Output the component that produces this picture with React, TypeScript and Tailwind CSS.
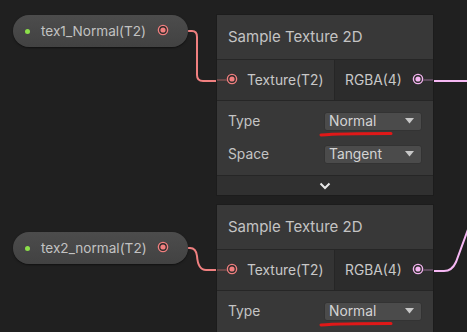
import React from "react";

const font = { fontFamily: "Inter, 'Noto Sans', sans-serif" };

function Port({ color }: { color: string }) {
  return (
    <svg width="12" height="12" viewBox="0 0 12 12" className="shrink-0">
      <circle cx="6" cy="6" r="4.6" fill="#2a2a2a" stroke={color} strokeWidth="1.4" />
      <circle cx="6" cy="6" r="2.6" fill={color} />
    </svg>
  );
}

function Pill({ label, top }: { label: string; top: number }) {
  return (
    <div
      className="absolute left-[13px] w-[175px] h-[32px] rounded-[16px] bg-gradient-to-b from-[#4c4c4c] to-[#424242] shadow-[0_1px_2px_rgba(0,0,0,0.5)] flex items-center pl-[12px] pr-[19px]"
      style={{ top }}
    >
      <div className="w-[5px] h-[5px] rounded-full bg-[#8ce04a]" />
      <span className="ml-[11px] text-[13.6px] text-[#c2c2c2]">{label}</span>
      <div className="ml-auto -mt-[3px]">
        <Port color="#f07f7f" />
      </div>
    </div>
  );
}

function Dropdown({ value, underline }: { value: string; underline?: boolean }) {
  return (
    <div className="relative w-[98px] h-[19px] rounded-[3px] bg-[#4b4b4b] border border-[#333] flex items-center pl-[4px] pr-[7px]">
      <span className="text-[13.8px] text-[#d4d4d4]">{value}</span>
      <svg width="9" height="6" viewBox="0 0 9 6" className="ml-auto">
        <polygon points="0,0 9,0 4.5,5.5" fill="#c8c8c8" />
      </svg>
      {underline && (
        <svg width="76" height="8" viewBox="0 0 76 8" className="absolute left-[-6px] top-[17px]">
          <path d="M2 5 C 20 3.5, 50 3.5, 72 3.5" stroke="#e01818" strokeWidth="3" fill="none" strokeLinecap="round" />
        </svg>
      )}
    </div>
  );
}

function Node({ top, full }: { top: number; full?: boolean }) {
  return (
    <div className="absolute left-[217px] w-[216px] bg-[#383838] shadow-[0_0_0_1px_#1c1c1c]" style={{ top }}>
      <div className="h-[45px] flex items-center pl-[11px] border-b border-[#262626]">
        <span className="text-[15px] text-[#c4c4c4]">Sample Texture 2D</span>
      </div>
      <div className="h-[41px] flex border-b border-[#262626]">
        <div className="w-[118px] bg-[#343434] flex items-center border-r border-[#262626] relative">
          <div className="absolute left-0 top-[19px] w-[10px] h-[2px] bg-[#6a4848]" />
          <div className="ml-[9px] -mt-[2px]">
            <Port color="#f07f7f" />
          </div>
          <span className="ml-[9px] text-[13.8px] text-[#c8c8c8]">Texture(T2)</span>
        </div>
        <div className="flex-1 bg-[#2c2c2c] flex items-center relative">
          <span className="ml-[10px] text-[13.8px] text-[#c8c8c8]">RGBA(4)</span>
          <div className="ml-[10px] -mt-[2px]">
            <Port color="#f4b4f0" />
          </div>
          <div className="absolute right-0 top-[19px] w-[10px] h-[2px] bg-[#5c4a5c]" />
        </div>
      </div>
      <div className="pl-[11px] pr-[11px] pt-[10px] pb-[11px] flex flex-col gap-[12px]">
        <div className="flex items-center justify-between">
          <span className="text-[13.8px] text-[#c4c4c4]">Type</span>
          <Dropdown value="Normal" underline />
        </div>
        {full && (
          <div className="flex items-center justify-between">
            <span className="text-[13.8px] text-[#c4c4c4]">Space</span>
            <Dropdown value="Tangent" />
          </div>
        )}
      </div>
      {full && (
        <div className="h-[20px] bg-[#303030] border-t border-[#262626] flex items-center justify-center">
          <svg width="12" height="8" viewBox="0 0 12 8">
            <path d="M1.5 1.5 L6 6 L10.5 1.5" stroke="#e8e8e8" strokeWidth="2" fill="none" />
          </svg>
        </div>
      )}
    </div>
  );
}

export default function App() {
  return (
    <div className="relative w-[467px] h-[332px] overflow-hidden bg-[#202020]" style={font}>
      <svg className="absolute inset-0" width="467" height="332">
        <path d="M188 31 L192 31 Q197 31 197 37 L197 75 Q197 81 203 81 L217 81" stroke="#f08080" strokeWidth="2" fill="none" />
        <path d="M188 248 L190 248 Q196 248 197 256 Q198 270 206 270 L217 270" stroke="#f08080" strokeWidth="2" fill="none" />
        <path d="M433 81 L467 81" stroke="#f6b8f4" strokeWidth="2" fill="none" />
        <path d="M433 271 L444 271 Q452 271 456 262 L470 224" stroke="#f6b8f4" strokeWidth="2" fill="none" />
      </svg>
      <Pill label="tex1_Normal(T2)" top={15} />
      <Pill label="tex2_normal(T2)" top={232} />
      <Node top={15} full />
      <Node top={205} />
    </div>
  );
}
